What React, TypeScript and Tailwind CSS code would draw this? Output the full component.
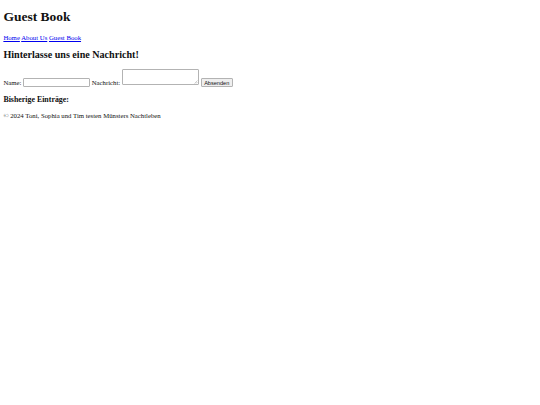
// The reference is a plain browser-default page shown at 540/1280 scale,
// so every default size below is multiplied by ~0.42.

const links = ["Home", "About Us", "Guest Book"]

export default function App() {
  return (
    <div className="mx-[3.375px] font-['Liberation_Serif',serif] text-[6.75px] leading-[normal] text-[#111]">
      <h1 className="my-[9px] text-[13.5px] font-bold leading-[normal]">Guest Book</h1>

      <nav>
        {links.map((label, i) => (
          <span key={label}>
            <a href="#" className="text-[#0000ee] underline">
              {label}
            </a>
            {i < links.length - 1 ? " " : ""}
          </span>
        ))}
      </nav>

      <h2 className="my-[8.4px] text-[10.1px] font-bold leading-[normal]">
        Hinterlasse uns eine Nachricht!
      </h2>

      <form onSubmit={(e) => e.preventDefault()}>
        <label htmlFor="name">Name:</label>{" "}
        <input
          id="name"
          type="text"
          className="w-[67px] rounded-[1px] border border-[#b3b3b3] bg-white px-[0.84px] py-[0.42px] align-baseline font-['Liberation_Sans',Arial,sans-serif] text-[5.6px] leading-[normal]"
        />{" "}
        <label htmlFor="msg">Nachricht:</label>{" "}
        <span className="relative inline-block align-baseline">
          <textarea
            id="msg"
            className="block h-[16px] w-[77px] resize-none rounded-[1px] border border-[#b3b3b3] bg-white px-[0.84px] py-[0.42px] font-['Liberation_Mono',monospace] text-[5.6px] leading-[normal]"
          />
          {/* tiny resize grip, the native one is far too big at this scale */}
          <svg className="pointer-events-none absolute right-[1px] bottom-[1px] h-[4px] w-[4px]" viewBox="0 0 4 4">
            <path d="M0.5 3.5 L3.5 0.5 M2 3.5 L3.5 2" stroke="#9a9a9a" strokeWidth="0.5" />
          </svg>
        </span>{" "}
        <button
          type="submit"
          className="rounded-[1px] border border-[#b3b3b3] bg-[#efefef] px-[2.5px] py-[0.42px] align-baseline font-['Liberation_Sans',Arial,sans-serif] text-[5.6px] leading-[normal]"
        >
          Absenden
        </button>
      </form>

      <h3 className="my-[7.9px] text-[7.9px] font-bold leading-[normal]">Bisherige Einträge:</h3>
      <div />

      <footer>
        <p className="my-[6.75px]">© 2024 Toni, Sophia und Tim testen Münsters Nachtleben</p>
      </footer>
    </div>
  )
}
